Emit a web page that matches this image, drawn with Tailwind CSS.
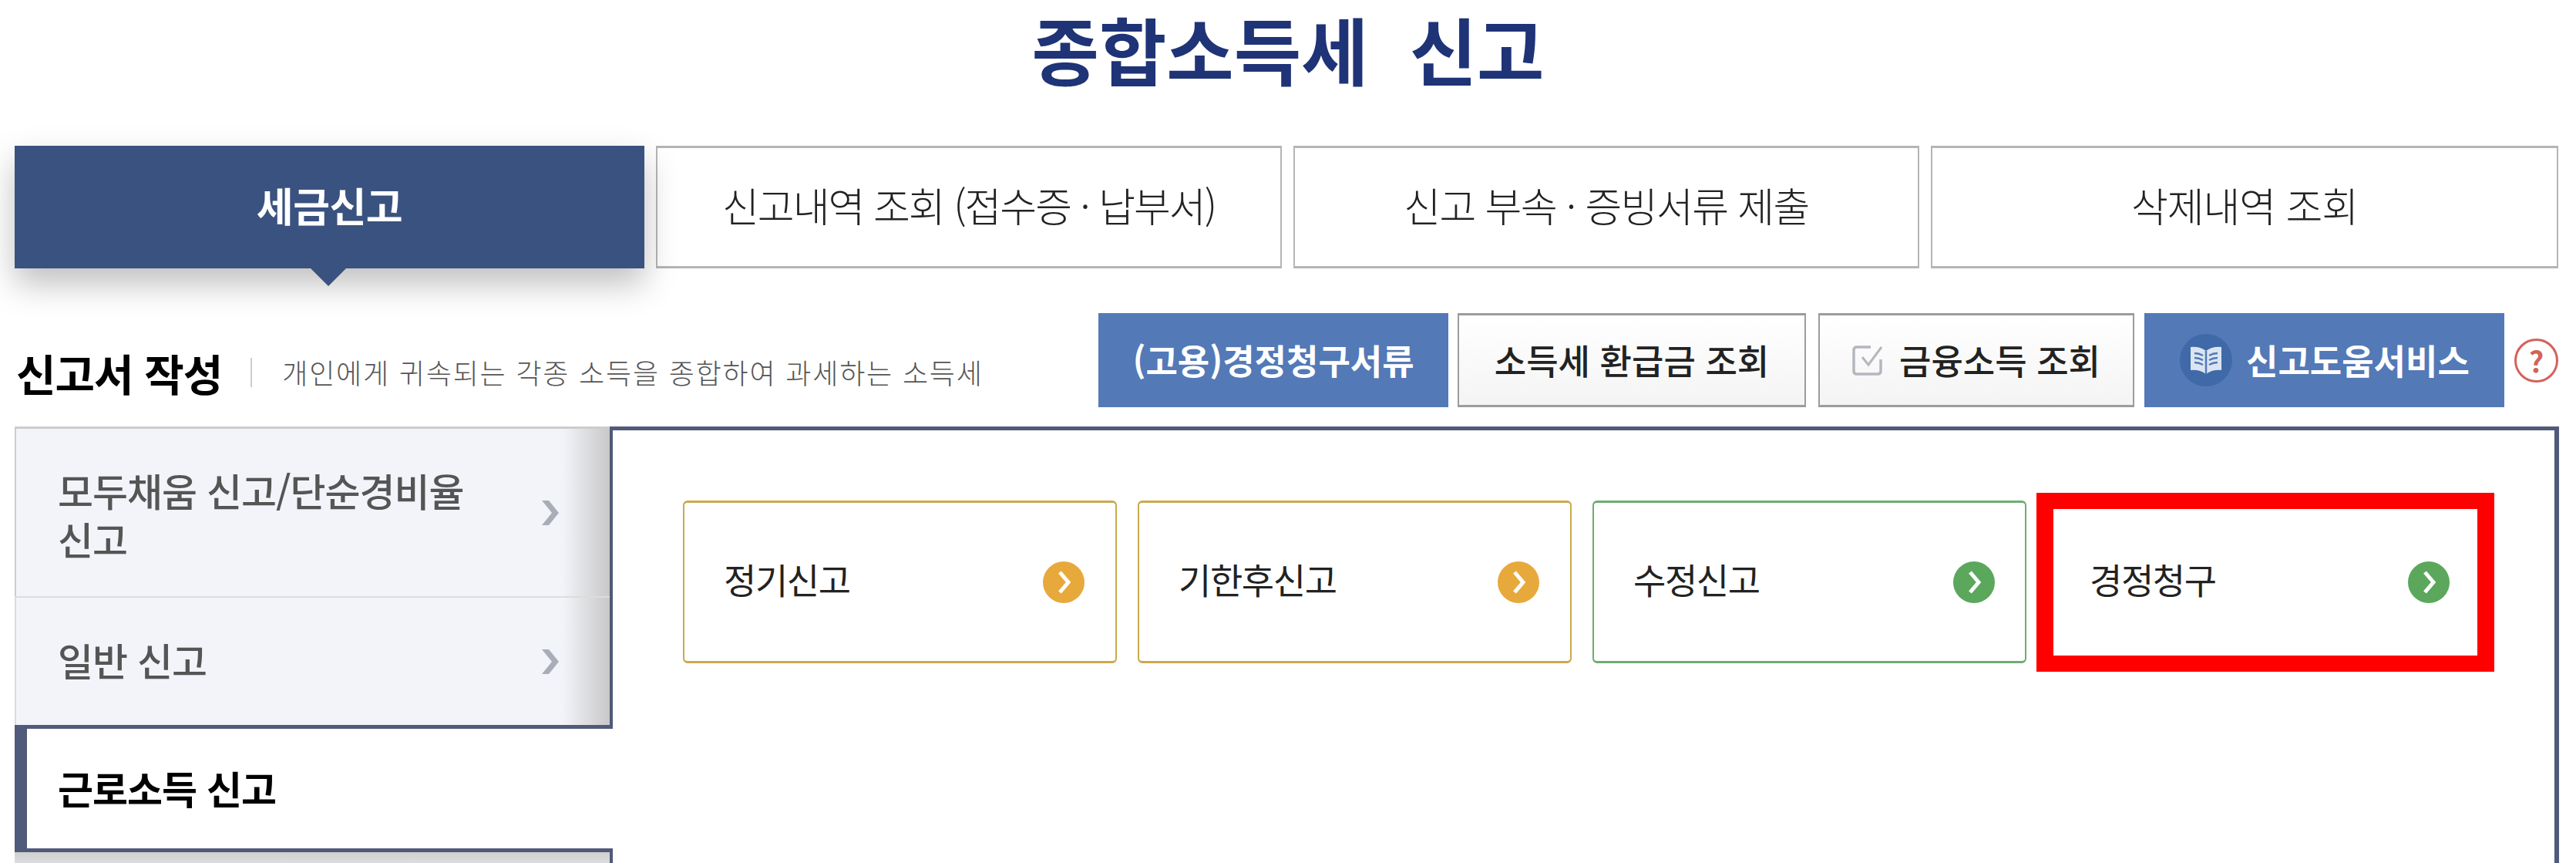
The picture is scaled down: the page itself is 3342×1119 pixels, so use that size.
<!DOCTYPE html>
<html lang="ko">

<head>
  <meta charset="UTF-8">
  <script src="https://cdn.jsdelivr.net/npm/@tailwindcss/browser@4"></script>
</head>

<body class="bg-white">
  <div class="w-[3342px] h-[1119px] overflow-hidden font-['Noto_Sans_CJK_KR','Noto_Sans_CJK_SC',sans-serif]">

    <h1 class="h-[125px] flex items-center justify-center text-[95px] leading-none font-bold text-[#1f3377]">종합소득세&nbsp;&nbsp;신고</h1>

    <!-- tabs -->
    <div class="mt-[64px] ml-[19px] w-[3300px] h-[159px] flex gap-[15px] text-[52px]">
      <a href="#" class="relative w-[817px] pb-[6px] flex items-center justify-center bg-[#3a527f] font-bold text-white tracking-[-0.5px] shadow-[0_20px_40px_rgba(0,0,0,0.25)]">
        세금신고
        <svg class="absolute left-[382px] top-[157px] w-[50px] h-[25px]" viewBox="0 0 50 25"><path d="M0 0H50L25 25Z" fill="#3a527f" /></svg>
      </a>
      <a href="#" class="w-[812px] pb-[6px] flex items-center justify-center bg-white border-x-2 border-y-[3px] border-[#b5b5b5] font-light text-[#222] tracking-[-2px]">신고내역 조회 (접수증 · 납부서)</a>
      <a href="#" class="w-[812px] pb-[6px] flex items-center justify-center bg-white border-x-2 border-y-[3px] border-[#b5b5b5] font-light text-[#222] tracking-[-1.6px]">신고 부속 · 증빙서류 제출</a>
      <a href="#" class="w-[814px] pb-[6px] flex items-center justify-center bg-white border-x-2 border-y-[3px] border-[#b5b5b5] font-light text-[#222] tracking-[-1.1px]">삭제내역 조회</a>
    </div>

    <!-- sub header -->
    <div class="mt-[58px] ml-[19px] w-[3300px] h-[122px] flex items-center">
      <h2 class="mt-[32px] ml-[2px] text-[56px] leading-none font-bold text-black tracking-[-1px]">신고서 작성</h2>
      <span class="mt-[32px] ml-[37px] w-[2px] h-[38px] bg-[#cccccc]"></span>
      <p class="mt-[30px] ml-[39px] text-[36px] leading-none font-light text-[#555] tracking-[1.8px]">개인에게 귀속되는 각종 소득을 종합하여 과세하는 소득세</p>

      <div class="ml-auto h-full flex items-stretch text-[45px] font-medium">
        <a href="#" class="w-[454px] flex items-center justify-center bg-[#5379b7] font-bold text-white">(고용)경정청구서류</a>
        <a href="#" class="ml-[12px] w-[452px] flex items-center justify-center bg-linear-to-b from-white to-[#f4f4f4] border-2 border-t-[3px] border-b-[3px] border-[#9c9c9c] text-[#222]">소득세 환급금 조회</a>
        <a href="#" class="ml-[16px] w-[410px] flex items-center justify-center gap-[20px] bg-linear-to-b from-white to-[#f4f4f4] border-2 border-t-[3px] border-b-[3px] border-[#9c9c9c] text-[#222]">
          <svg class="w-[41px] h-[39px]" viewBox="0 0 41 39" fill="none" stroke="#b4b7bd" stroke-width="3.5">
            <path d="M24 2H6Q2 2 2 6V33Q2 37 6 37H33Q37 37 37 33V18" />
            <path d="M13 15L21 25L38 2" stroke-width="3" />
          </svg>
          금융소득 조회
        </a>
        <a href="#" class="ml-[13px] w-[467px] flex items-center pl-[46px] gap-[18px] bg-[#5379b7] font-bold text-white">
          <span class="w-[68px] h-[68px] rounded-full bg-[#4069a8] flex items-center justify-center">
            <svg class="w-[44px] h-[40px]" viewBox="0 0 44 40" fill="none">
              <path d="M22 8Q14 2 2 3V33Q14 32 22 38Q30 32 42 33V3Q30 2 22 8Z" fill="#dbe5f2" />
              <path d="M22 8V38M7 11Q13 11 18 14M7 17Q13 17 18 20M7 23Q13 23 18 26M37 11Q31 11 26 14M37 17Q31 17 26 20M37 23Q31 23 26 26" stroke="#5379b7" stroke-width="2.5" />
            </svg>
          </span>
          신고도움서비스
        </a>
        <span class="ml-[13px] self-center w-[57px] h-[57px] rounded-full border-[3px] border-[#d2635c] flex items-center justify-center text-[38px] leading-none font-bold text-[#d2635c]">?</span>
      </div>
    </div>

    <!-- main -->
    <div class="mt-[25px] ml-[19px] w-[3301px] flex">
      <div class="w-[772px] shrink-0 text-[50px] leading-[63px] font-medium text-[#555] tracking-[-1px]">
        <a href="#" class="h-[220px] flex items-center justify-between pl-[54px] pr-[64px] border-t-[3px] border-l-2 border-[#cccccc] bg-[linear-gradient(to_right,#f3f4f9_92%,#c8c8c8)]">
          <span class="w-[570px] mt-[4px]">모두채움 신고/단순경비율 신고</span>
          <svg class="w-[26px] h-[32px]" viewBox="0 0 26 32"><path d="M2 0H11L24 16L11 32H2L15 16Z" fill="#a9adb8" /></svg>
        </a>
        <a href="#" class="h-[167px] flex items-center justify-between pl-[54px] pr-[64px] border-t-2 border-l-2 border-[#dcdcdc] bg-[linear-gradient(to_right,#f3f4f9_92%,#c8c8c8)]">
          <span class="-mt-[4px]">일반 신고</span>
          <svg class="w-[26px] h-[34px]" viewBox="0 0 26 32"><path d="M2 0H11L24 16L11 32H2L15 16Z" fill="#a9adb8" /></svg>
        </a>
        <a href="#" class="relative z-10 w-[776px] h-[165px] pb-[2px] flex items-center pl-[40px] border-y-[5px] border-l-[16px] border-[#505a7a] bg-white font-bold text-black">근로소득 신고</a>
        <div class="h-[40px] bg-linear-to-b from-[#d0d0d0] to-[#f3f4f9]"></div>
      </div>

      <div class="flex-1 h-[600px] pt-[91px] pl-[91px] border-t-[5px] border-l-[4px] border-r-[6px] border-[#505a7a] flex items-start gap-[27px] text-[46px] font-normal text-[#222] tracking-[-1.4px]">
        <a href="#" class="w-[563px] h-[211px] shrink-0 pb-[2px] flex items-center justify-between pl-[51px] pr-[40px] border-2 border-y-[3px] border-[#cba94f] rounded-[6px]">
          <span class="-mt-[6px]">정기신고</span>
          <svg class="w-[54px] h-[54px] mt-[2px]" viewBox="0 0 54 54"><circle cx="27" cy="27" r="27" fill="#e8a93c" /><path d="M22 14L33 27L22 40" fill="none" stroke="#fff" stroke-width="5" /></svg>
        </a>
        <a href="#" class="w-[563px] h-[211px] shrink-0 pb-[2px] flex items-center justify-between pl-[51px] pr-[40px] border-2 border-y-[3px] border-[#cba94f] rounded-[6px]">
          <span class="-mt-[6px]">기한후신고</span>
          <svg class="w-[54px] h-[54px] mt-[2px]" viewBox="0 0 54 54"><circle cx="27" cy="27" r="27" fill="#e8a93c" /><path d="M22 14L33 27L22 40" fill="none" stroke="#fff" stroke-width="5" /></svg>
        </a>
        <a href="#" class="w-[563px] h-[211px] shrink-0 pb-[2px] flex items-center justify-between pl-[51px] pr-[39px] border-2 border-y-[3px] border-[#6cae6f] rounded-[6px]">
          <span class="-mt-[6px]">수정신고</span>
          <svg class="w-[54px] h-[54px] mt-[2px]" viewBox="0 0 54 54"><circle cx="27" cy="27" r="27" fill="#5ba75c" /><path d="M22 14L33 27L22 40" fill="none" stroke="#fff" stroke-width="5" /></svg>
        </a>
        <a href="#" class="relative w-[563px] h-[211px] shrink-0 pb-[2px] flex items-center justify-between pl-[53px] pr-[39px] border-2 border-y-[3px] border-[#6cae6f] rounded-[6px]">
          <span class="-mt-[6px]">경정청구</span>
          <svg class="w-[54px] h-[54px] mt-[2px]" viewBox="0 0 54 54"><circle cx="27" cy="27" r="27" fill="#5ba75c" /><path d="M22 14L33 27L22 40" fill="none" stroke="#fff" stroke-width="5" /></svg>
          <span class="absolute -left-[16px] -right-[19px] -top-[13px] -bottom-[14px] border-x-[22px] border-y-[21px] border-[#ff0000]"></span>
        </a>
      </div>
    </div>
  </div>
</body>

</html>
